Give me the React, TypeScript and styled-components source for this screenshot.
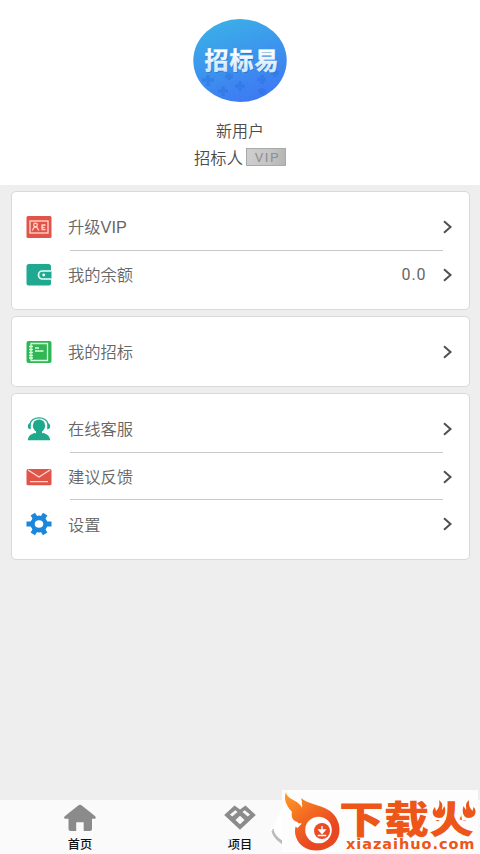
import React from 'react';
import styled, { createGlobalStyle } from 'styled-components';

const GlobalStyle = createGlobalStyle`
  * { box-sizing: border-box; }
  body {
    margin: 0;
    background: #eeeeee;
    font-family: "Liberation Sans", "Noto Sans CJK SC", sans-serif;
    font-weight: 350;
    color: #666;
  }
`;

const Screen = styled.div`
  position: relative;
  display: flex;
  flex-direction: column;
  width: 480px;
  height: 854px;
  overflow: hidden;
  background: #eeeeee;
`;

const Profile = styled.header`
  display: flex;
  flex-direction: column;
  align-items: center;
  height: 185px;
  padding-top: 19px;
  background: #fff;
`;

const Avatar = styled.svg`
  display: block;
  width: 94px;
  height: 84px;
`;

const UserName = styled.div`
  margin-top: 17px;
  font-size: 16px;
  line-height: 24px;
  color: #4c4c4c;
`;

const RoleLine = styled.div`
  display: flex;
  align-items: center;
  gap: 3px;
  height: 26px;
  font-size: 16.3px;
  color: #4c4c4c;
`;

const VipBadge = styled.span`
  width: 40px;
  height: 18px;
  padding-left: 3px;
  border: 1px solid #a9a9a9;
  background: linear-gradient(100deg, #cfcfcf, #c4c4c4 60%, #b4b4b4);
  color: #8f8f8f;
  font-family: Roboto, sans-serif;
  font-size: 13.5px;
  font-weight: 400;
  line-height: 17px;
  letter-spacing: 1.6px;
  text-align: center;
`;

const Cards = styled.main`
  flex: 1;
  display: flex;
  flex-direction: column;
  gap: 6px;
  padding: 6px 10.5px 0;
`;

const Card = styled.section<{ $height: number }>`
  height: ${(p) => p.$height}px;
  padding: 11px 16px 0 14.5px;
  border: 1px solid #d9d9d9;
  border-radius: 5px;
  background: #fff;
`;

const Row = styled.div`
  display: flex;
  align-items: center;
  height: 47.7px;
`;

const RowIcon = styled.svg`
  width: 26px;
  height: 26px;
  margin-right: 16px;
  flex: none;
`;

const Label = styled.span`
  flex: 1;
  padding-top: 1px;
  font-size: 16.3px;
  line-height: 24px;
`;

const Amount = styled.span`
  margin-right: 15px;
  font-family: Roboto, sans-serif;
  font-size: 16px;
  font-weight: 400;
  letter-spacing: 0.9px;
`;

const Chevron = styled.svg`
  width: 11px;
  height: 14px;
  fill: none;
  stroke: #505050;
  stroke-width: 2;
`;

const Divider = styled.hr`
  height: 1px;
  margin: -1px 10px 0 43.5px;
  border: 0;
  background: #c8c8c8;
`;

const TabBar = styled.nav`
  display: grid;
  grid-template-columns: repeat(3, 1fr);
  height: 54px;
  background: #fafafa;
`;

const Tab = styled.div`
  display: flex;
  flex-direction: column;
  align-items: center;
  padding-top: 3px;
  color: #111;
  font-size: 12.2px;
  font-weight: 500;
  line-height: 20px;
`;

const TabIcon = styled.svg`
  width: 34px;
  height: 30px;
  margin-bottom: 2px;
  fill: #8b8b8b;
`;

const Swirl = styled.svg`
  position: absolute;
  left: 266px;
  top: 804px;
  width: 30px;
  height: 50px;
`;

const Brand = styled.aside`
  position: absolute;
  left: 282px;
  top: 790px;
  display: flex;
  width: 196px;
  height: 62px;
  background: #fdfdfd;
`;

const BrandMark = styled.svg`
  width: 58px;
  height: 62px;
  flex: none;
`;

const BrandWords = styled.div`
  position: relative;
  width: 138px;
  padding-top: 6px;
  color: #ee5518;
`;

const BrandTitle = styled.div`
  height: 41px;
  margin-left: -1px;
  font-family: "Noto Sans CJK SC", sans-serif;
  font-size: 45px;
  font-weight: 900;
  line-height: 41px;
  white-space: nowrap;
  transform: scaleY(0.84);
`;

const BrandUrl = styled.div`
  position: relative;
  padding-left: 6px;
  font-family: "DejaVu Sans", sans-serif;
  font-size: 14.5px;
  font-weight: 700;
  line-height: 15px;
  letter-spacing: 0.95px;
  white-space: nowrap;
`;

const Flames = styled.svg`
  position: absolute;
  left: 92px;
  top: 9px;
  width: 44px;
  height: 24px;
`;

type IconName = 'card' | 'wallet' | 'book' | 'agent' | 'mail' | 'gear';

const art: Record<IconName, React.ReactNode> = {
  card: (
    <>
      <rect x="0.5" y="2" width="25" height="22" rx="1.5" fill="#e15549" />
      <g fill="none" stroke="#ffd8d0" strokeWidth="1.3">
        <rect x="4" y="7" width="18" height="12" />
        <circle cx="9.5" cy="11" r="1.8" />
        <path d="M6.2 16.5 8.4 13h2.2l2.3 3.5M15.5 11H19.500M15.500 13.300H18.500M15.500 15.500H19.500M16 11v4.500" />
      </g>
    </>
  ),
  wallet: (
    <>
      <path d="M3 2h19.500A2.500 2.500 0 0 1 25 4.500V21.500a2 2 0 0 1-2 2H2.500a2 2 0 0 1-2-2V4.500A2.500 2.500 0 0 1 3 2Z" fill="#1fa991" />
      <path d="M25.500 9H16.500a4 4 0 0 0 0 8h9" fill="#1fa991" stroke="#e6fff8" strokeWidth="1.700" />
      <circle cx="17.700" cy="13" r="1.400" fill="#e6fff8" />
    </>
  ),
  book: (
    <>
      <rect x="0.500" y="2" width="25" height="22" rx="2" fill="#30b755" />
      <g fill="none" stroke="#d5ffdc" strokeWidth="1.300">
        <path d="M5 4.500h16.500v17H5Z" />
        <path d="M3 7.500h4M3 10.500h4M3 13.500h4M3 16.500h4M3 19h4M9 9h4M9 12h8.500" strokeWidth="1.400" />
      </g>
    </>
  ),
  agent: (
    <>
      <ellipse cx="13" cy="9.800" rx="6.200" ry="6.400" fill="#1fa98c" />
      <path d="M10 14h6v5h-6Z" fill="#1fa98c" />
      <path d="M1.800 24.300c.3-4.200 3.500-6.500 7-7.300 2.500 1.200 6 1.200 8.400 0 3.500.800 6.700 3.100 7 7.300Z" fill="#1fa98c" />
      <path d="M4 8C6-.1 20-.1 22 8" fill="none" stroke="#1fa98c" strokeWidth="1.200" />
      <path d="M4.800 7v6.300C3 13.300 1.800 12 1.800 10.200S3 7 4.800 7ZM21.200 7v6.300c1.800 0 3-1.300 3-3.100S23 7 21.200 7Z" fill="#1fa98c" />
    </>
  ),
  mail: (
    <>
      <rect x="0.500" y="5" width="25" height="16.200" rx="1.500" fill="#e15549" />
      <path d="m2 6 11 7 11-7M4 17.700h18" fill="none" stroke="#ffd9d3" strokeWidth="1.300" />
    </>
  ),
  gear: (
    <>
      <g stroke="#1b87dc" strokeWidth="5.200">
        <path d="M.500 13h25M6.800 3.200l12.400 19.600M19.200 3.200 6.800 22.800" />
      </g>
      <circle cx="13" cy="13" r="8.600" fill="#1b87dc" />
      <ellipse cx="13" cy="13" rx="4.300" ry="3.800" fill="#fff" />
    </>
  ),
};

const groups: { height: number; rows: { icon: IconName; label: string; value?: string }[] }[] = [
  { height: 119, rows: [{ icon: 'card', label: '升级VIP' }, { icon: 'wallet', label: '我的余额', value: '0.0' }] },
  { height: 71, rows: [{ icon: 'book', label: '我的招标' }] },
  {
    height: 167,
    rows: [
      { icon: 'agent', label: '在线客服' },
      { icon: 'mail', label: '建议反馈' },
      { icon: 'gear', label: '设置' },
    ],
  },
];

export default function App() {
  return (
    <Screen>
      <GlobalStyle />
      <Profile>
        <Avatar viewBox="0 0 94 84">
          <defs>
            <linearGradient id="sky" x1="0.25" y1="0" x2="0.65" y2="1">
              <stop offset="0" stopColor="#3bb0e8" />
              <stop offset="1" stopColor="#3e78f3" />
            </linearGradient>
            <linearGradient id="ink" x1="0" y1="0" x2="0" y2="1">
              <stop offset="0.3" stopColor="#fff" />
              <stop offset="1" stopColor="#c5e0ff" />
            </linearGradient>
          </defs>
          <ellipse cx="47" cy="41.500" rx="46.700" ry="41.500" fill="url(#sky)" />
          <path
            d="M15 56v11M9 61h12M36 54v7M32 57.500h8M30 67v10M25 72h10M47 62v10M42 67h10M69 56v9M64 60.500h9M69 69v7M65 72h8M82 50v8M78 54h8"
            stroke="#286ddd"
            strokeWidth="3.500"
            opacity="0.4"
          />
          <g fontFamily="Noto Sans CJK SC, sans-serif" fontSize="24" fontWeight="700">
            <text x="12.500" y="50.500" textLength="74" fill="#2878ce">招标易</text>
            <text x="11.500" y="49.500" textLength="74" fill="url(#ink)" stroke="#eef8ff" strokeWidth="0.400">招标易</text>
          </g>
        </Avatar>
        <UserName>新用户</UserName>
        <RoleLine>
          招标人<VipBadge>VIP</VipBadge>
        </RoleLine>
      </Profile>

      <Cards>
        {groups.map((group) => (
          <Card key={group.rows[0].label} $height={group.height}>
            {group.rows.map((row, i) => (
              <React.Fragment key={row.label}>
                {i > 0 && <Divider />}
                <Row>
                  <RowIcon viewBox="0 0 26 26">{art[row.icon]}</RowIcon>
                  <Label>{row.label}</Label>
                  {row.value && <Amount>{row.value}</Amount>}
                  <Chevron viewBox="0 0 11 14">
                    <path d="m2 1.300 6.500 5.700L2 12.700" />
                  </Chevron>
                </Row>
              </React.Fragment>
            ))}
          </Card>
        ))}
      </Cards>

      <TabBar>
        <Tab>
          <TabIcon viewBox="0 0 34 30">
            <path d="M15.500 2.300q1.500-1 3 0L32 13q1.800 2.600-.5 2.700H29V26q0 2-2 2h-6.300v-8.700h-7.500V28H7.500q-2 0-2-2V15.700H2.600Q-.2 15.300 2 13Z" />
          </TabIcon>
          首页
        </Tab>
        <Tab>
          <TabIcon viewBox="0 0 34 30">
            <path
              fillRule="evenodd"
              d="M11.500 2.500 17 6.500l5.500-4L32.800 12 17 26.800 1.200 12ZM7 11.500l2.200 2L14.500 9 12.300 7.200ZM19.500 9l5.300 4.500 2.200-2-5.300-4.300ZM12.500 17l4.500 4.200 4.500-4.200-4.500-4.200Z"
            />
          </TabIcon>
          项目
        </Tab>
      </TabBar>

      <Swirl viewBox="0 0 30 50">
        <path d="M23 0C9 7 12 21 6 23s1 14 17 19V0Z" fill="#fff" />
        <path d="M7 25c0 7 7 12 17 17M6 27c2 8 10 13 18 17" fill="none" stroke="#bbb" strokeWidth="1.500" />
      </Swirl>
      <Brand>
        <BrandMark viewBox="0 0 58 62">
          <defs>
            <linearGradient id="fire" x1="0" y1="0" x2="0.6" y2="0.8">
              <stop offset="0" stopColor="#ff9c24" />
              <stop offset="0.55" stopColor="#f36a22" />
              <stop offset="1" stopColor="#e94720" />
            </linearGradient>
          </defs>
          <path d="M4 2C5 10 17 10 20 18q.5-6-1-10c8 7 19 6 29 13 13 10 12 28 1 35-13 9-31 4-35-9-2-6-1-11 2-15-6-1-7-6-6-10C5 16 1 10 4 2Z" fill="url(#fire)" />
          <path d="M10 30c1 4 3 7 6 8 1-3 3-2 3.500-5-4 1-6-1-9.500-3Z" fill="#fff" />
          <circle cx="36.500" cy="40" r="13.300" fill="#fff" />
          <circle cx="40" cy="41" r="8" fill="#e94c26" />
          <path d="M40 36v4M37 40h6l-3 3.500ZM35.800 45.500h8.400" fill="#fff" stroke="#fff" strokeWidth="1.400" />
        </BrandMark>
        <BrandWords>
          <BrandTitle>下载火</BrandTitle>
          <BrandUrl>xiazaihuo.com</BrandUrl>
          <Flames viewBox="0 0 44 24">
            <path d="M-2 0h15.500v21H-2ZM27 0h17v21.500H30Z" fill="#fdfdfd" />
            <path
              d="M7 1c6 5 2 8 3 10l2.500-4c2 6 0 12-5 12C0 19-1 12 3 8l1 4c3-3 4-6 3-11ZM37 1c-5 4-2 8-3 10l-2.500-4c-2 6 0 12 5 12 7 0 9-7 5-11l-1 4c-3-3-4-6-3.500-11Z"
              fill="#ee5518"
            />
          </Flames>
        </BrandWords>
      </Brand>
    </Screen>
  );
}
